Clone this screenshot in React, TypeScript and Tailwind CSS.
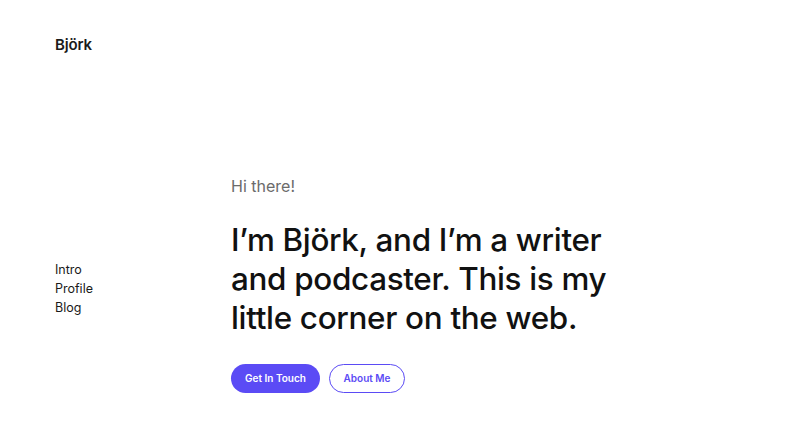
const navItems = ['Intro', 'Profile', 'Blog'];

export default function App() {
    return (
        <div className="relative h-[445px] w-[800px] overflow-hidden bg-white font-['Inter',sans-serif] text-[#1a1a1a]">
            <header className="px-[55px] pt-[32px]">
                <a className="text-[15px] font-semibold leading-[18px] tracking-[-0.01em]">Björk</a>
            </header>

            <div className="flex pt-[120px]">
                <nav className="flex w-[231px] shrink-0 flex-col pl-[55px] pt-[84px] text-[12.5px] leading-[19px]">
                    {navItems.map((item) => (
                        <a key={item}>{item}</a>
                    ))}
                </nav>

                <main className="flex flex-col">
                    <p className="text-[16px] leading-[20px] text-[#6b6b6b]">Hi there!</p>
                    <h1 className="mt-[25px] text-[31.4px] font-medium leading-[39px] tracking-[-0.01em] text-[#111]">
                        I’m Björk, and I’m a writer
                        <br />
                        and podcaster. This is my
                        <br />
                        little corner on the web.
                    </h1>
                    <div className="mt-[26px] flex gap-[9px]">
                        <button className="h-[29px] w-[89px] rounded-full bg-[#5b4bf5] text-[10px] font-semibold text-white">
                            Get In Touch
                        </button>
                        <button className="h-[29px] w-[76px] rounded-full border border-[#5b4bf5] text-[10px] font-semibold text-[#5b4bf5]">
                            About Me
                        </button>
                    </div>
                </main>
            </div>
        </div>
    );
}
